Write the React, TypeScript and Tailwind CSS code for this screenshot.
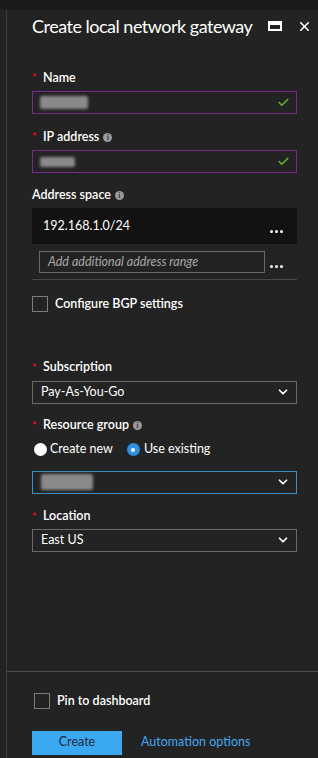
import { Check, ChevronDown, X } from 'lucide-react'

const font = { fontFamily: 'Lato, "Noto Sans", sans-serif' }

function Info() {
  return (
    <span className="ml-1 inline-flex h-[9px] w-[9px] items-center justify-center rounded-full bg-[#9a9a9a] text-[7px] font-bold leading-none text-[#222]">
      i
    </span>
  )
}

function Label({ text, required, info }: { text: string; required?: boolean; info?: boolean }) {
  return (
    <div className="flex h-[16px] items-center text-[12.5px] font-semibold text-white">
      {required && <span className="mr-[5px] w-[6px] text-[11px] text-[#e81123]">*</span>}
      {text}
      {info && <Info />}
    </div>
  )
}

function Dots() {
  return (
    <span className="flex w-[15px] gap-[2px]">
      <span className="h-[3px] w-[3px] rounded-full bg-white" />
      <span className="h-[3px] w-[3px] rounded-full bg-white" />
      <span className="h-[3px] w-[3px] rounded-full bg-white" />
    </span>
  )
}

function Blur({ w, h }: { w: number; h: number }) {
  return (
    <span
      className="block rounded-[2px] bg-[#8a8a8a] blur-[1.5px]"
      style={{ width: w, height: h }}
    />
  )
}

function ValidInput({ blurW, blurH }: { blurW: number; blurH: number }) {
  return (
    <div className="mt-[5px] flex h-[23px] items-center justify-between border border-[#7a2a8a] pl-[7px] pr-[6px]">
      <Blur w={blurW} h={blurH} />
      <Check size={13} strokeWidth={3} className="text-[#62b22f]" />
    </div>
  )
}

function Select({ children, active }: { children: React.ReactNode; active?: boolean }) {
  return (
    <div
      className={
        'mt-[5px] flex h-[23px] items-center justify-between border pl-[8px] pr-[6px] text-[12.5px] text-white ' +
        (active ? 'border-[#3a8fc8]' : 'border-[#6a6a6a]')
      }
    >
      {children}
      <ChevronDown size={14} strokeWidth={3} className="text-white" />
    </div>
  )
}

export default function App() {
  return (
    <div className="flex h-[758px] w-[318px] flex-col overflow-hidden bg-[#232323]" style={font}>
      <div className="h-[10px] shrink-0 bg-[#1b1b1b]" />
      <div className="flex flex-1">
        <div className="w-[7px] shrink-0 border-r border-[#3c3c3c] bg-[#232323]" />
        <div className="flex min-w-0 flex-1 flex-col">
          <div className="flex-1 pl-[25px] pr-[21px]">
            <div className="-mr-[15px] flex h-[32px] items-center justify-between">
              <h1 className="whitespace-nowrap text-[18px] font-normal tracking-[-0.5px] text-white">Create local network gateway</h1>
              <div className="flex items-center gap-[15px]">
                <span className="h-[10px] w-[14px] border-[2px] border-t-[4px] border-white" />
                <X size={15} strokeWidth={2.5} className="text-white" />
              </div>
            </div>

            <div className="mt-[28px]">
              <Label text="Name" required />
              <ValidInput blurW={48} blurH={13} />
            </div>

            <div className="mt-[15px]">
              <Label text="IP address" required info />
              <ValidInput blurW={35} blurH={10} />
            </div>

            <div className="mt-[14px]">
              <Label text="Address space" info />
              <div className="mt-[5px] flex h-[36px] items-center justify-between bg-[#121212] pl-[11px] pr-[12px]">
                <span className="text-[12.5px] text-white">192.168.1.0/24</span>
                <span className="mt-[10px]">
                  <Dots />
                </span>
              </div>
              <div className="flex items-center justify-between border-b border-[#4a4a4a] pb-[6px] pl-[7px] pr-[12px] pt-[7px]">
                <div className="flex h-[22px] w-[226px] items-center border border-[#6a6a6a] pl-[8px] text-[12.5px] italic text-[#a8a8a8]">
                  Add additional address range
                </div>
                <span className="mt-[8px]">
                  <Dots />
                </span>
              </div>
            </div>

            <div className="mt-[15px] flex items-center gap-[7px]">
              <span className="h-[16px] w-[16px] border border-[#7a7a7a]" />
              <span className="text-[12.5px] font-semibold text-white">Configure BGP settings</span>
            </div>

            <div className="mt-[46px]">
              <Label text="Subscription" required />
              <Select>
                <span>Pay-As-You-Go</span>
              </Select>
            </div>

            <div className="mt-[14px]">
              <Label text="Resource group" required info />
              <div className="mt-[8px] flex h-[16px] items-center pl-[2px] text-[12.5px] text-white">
                <span className="h-[13px] w-[13px] rounded-full bg-white" />
                <span className="ml-[3px]">Create new</span>
                <span className="ml-[14px] flex h-[13px] w-[13px] items-center justify-center rounded-full bg-[#2d8fe0]">
                  <span className="h-[4px] w-[4px] rounded-full bg-white" />
                </span>
                <span className="ml-[4px]">Use existing</span>
              </div>
              <div className="mt-[13px]">
                <Select active>
                  <Blur w={52} h={16} />
                </Select>
              </div>
            </div>

            <div className="mt-[15px]">
              <Label text="Location" required />
              <div className="-mt-[1px]">
                <Select>
                  <span>East US</span>
                </Select>
              </div>
            </div>
          </div>

          <div className="h-[87px] shrink-0 border-t border-[#4e4e4e] pl-[27px]">
            <div className="mt-[20px] flex items-center gap-[7px]">
              <span className="h-[16px] w-[16px] border border-[#7a7a7a]" />
              <span className="text-[12.5px] font-semibold text-white">Pin to dashboard</span>
            </div>
            <div className="mt-[20px] -ml-[2px] flex items-center">
              <button className="flex h-[24px] w-[90px] items-center justify-center bg-[#3aa9f2] text-[12.5px] text-[#1c2a36]">
                Create
              </button>
              <span className="ml-[19px] text-[12.5px] text-[#40a8ee]">Automation options</span>
            </div>
          </div>
        </div>
      </div>
    </div>
  )
}
